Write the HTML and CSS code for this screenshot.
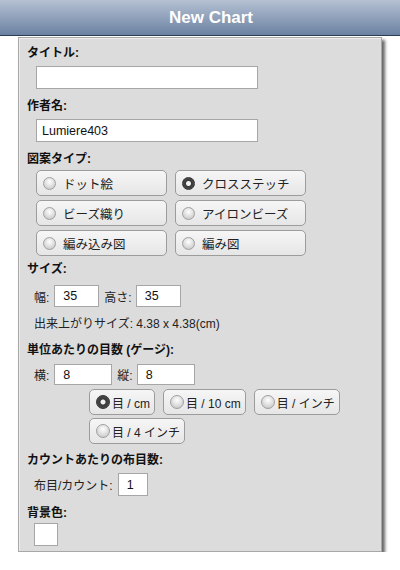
FILE: index.html
```html
<!DOCTYPE html>
<html lang="ja">
<head>
  <meta charset="UTF-8" />
  <meta name="viewport" content="width=device-width, initial-scale=1.0"/>
  <title>New Chart</title>
  <link rel="stylesheet" href="styles.css">
</head>
<body>

  <div class="navbar">New Chart</div>

  <form class="panel" id="chartForm">
    <label class="field-label">タイトル:</label>
    <input class="text-input" type="text" name="title" />

    <label class="field-label gap-9">作者名:</label>
    <input class="text-input gap-3" type="text" name="author" value="Lumiere403" />

    <label class="field-label gap-9">図案タイプ:</label>
    <div class="pattern-grid">
      <label class="choice"><input type="radio" name="ptype" value="dot" /><span class="dot"></span>ドット絵</label>
      <label class="choice"><input type="radio" name="ptype" value="cross" checked /><span class="dot"></span>クロスステッチ</label>
      <label class="choice"><input type="radio" name="ptype" value="beads" /><span class="dot"></span>ビーズ織り</label>
      <label class="choice"><input type="radio" name="ptype" value="iron" /><span class="dot"></span>アイロンビーズ</label>
      <label class="choice"><input type="radio" name="ptype" value="knit-in" /><span class="dot"></span>編み込み図</label>
      <label class="choice"><input type="radio" name="ptype" value="knit" /><span class="dot"></span>編み図</label>
    </div>

    <label class="field-label gap-5">サイズ:</label>
    <div class="sub-row size-row">
      <span>幅:</span>
      <input class="num-input small" type="text" value="35" />
      <span class="after">高さ:</span>
      <input class="num-input small" type="text" value="35" />
    </div>
    <div class="sub-row note">出来上がりサイズ: 4.38 x 4.38(cm)</div>

    <label class="field-label gap-10">単位あたりの目数 (ゲージ):</label>
    <div class="sub-row gauge-row">
      <span>横:</span>
      <input class="num-input wide" type="text" value="8" />
      <span class="after">縦:</span>
      <input class="num-input wide" type="text" value="8" />
    </div>
    <div class="unit-group">
      <label class="choice unit"><input type="radio" name="unit" value="cm" checked /><span class="dot"></span>目 / cm</label>
      <label class="choice unit"><input type="radio" name="unit" value="10cm" /><span class="dot"></span>目 / 10 cm</label>
      <label class="choice unit"><input type="radio" name="unit" value="inch" /><span class="dot"></span>目 / インチ</label>
      <label class="choice unit"><input type="radio" name="unit" value="4inch" /><span class="dot"></span>目 / 4 インチ</label>
    </div>

    <label class="field-label gap-8">カウントあたりの布目数:</label>
    <div class="sub-row count-row">
      <span>布目/カウント:</span>
      <input class="num-input count" type="text" value="1" />
    </div>

    <label class="field-label gap-9">背景色:</label>
    <div class="color-box"></div>
  </form>

</body>
</html>
```

FILE: styles.css
```css
* {
  box-sizing: border-box;
  font-family: "Liberation Sans", "Noto Sans CJK JP", sans-serif;
}
body {
  margin: 0;
  background: white;
  color: #1a1a1a;
  font-size: 12px;
}
.navbar {
  height: 36px;
  line-height: 35px;
  padding-left: 22px;
  text-align: center;
  color: white;
  font-size: 17px;
  font-weight: bold;
  background: linear-gradient(#b5c1d3, #6b81a2);
  border-bottom: 1px solid #2b3c58;
}
.panel {
  display: flex;
  flex-direction: column;
  align-items: flex-start;
  width: 364px;
  margin: 1px 0 0 18px;
  padding: 7px 8px 5px;
  background: #dcdcdc;
  border: 1px solid #a8a8a8;
  box-shadow: inset 1px 1px 0 #ececec, 3px 3px 3px rgba(0,0,0,0.6);
}
.field-label {
  display: block;
  line-height: 16px;
  font-weight: bold;
  font-size: 12px;
  color: #111;
}
.gap-5 { margin-top: 5px; }
.gap-8 { margin-top: 8px; }
.gap-9 { margin-top: 9px; }
.gap-10 { margin-top: 10px; }
.gap-3 { margin-top: 3px !important; }

input[type=text] {
  background: white;
  border: 1px solid #a6a6a6;
  border-radius: 0;
  outline: none;
  color: #111;
  font-size: 12.5px;
  margin: 0;
}
.text-input {
  width: 222px;
  height: 23px;
  margin: 5px 0 0 9px !important;
  padding: 0 5px;
}
.pattern-grid {
  display: grid;
  grid-template-columns: 131px 131px;
  column-gap: 8px;
  row-gap: 4px;
  margin: 3px 0 0 9px;
}
.choice {
  display: flex;
  align-items: center;
  height: 26px;
  padding-left: 6px;
  font-size: 12.5px;
  color: #222;
  background: linear-gradient(#f6f6f6, #e6e6e6);
  border: 1px solid #9c9c9c;
  border-radius: 5px;
  cursor: pointer;
}
.choice input {
  display: none;
}
.dot {
  width: 13px;
  height: 13px;
  margin-right: 7px;
  border-radius: 50%;
  border: 1px solid #a0a0a0;
  background: radial-gradient(circle at 50% 35%, #ffffff, #d2d2d2 70%, #bcbcbc);
}
.choice input:checked + .dot {
  border-color: #333;
  background: radial-gradient(circle, #f2f2f2 0 2px, #3a3a3a 3px, #555 100%);
}
.sub-row {
  display: flex;
  align-items: center;
  margin-left: 7px;
  color: #222;
}
.sub-row span {
  margin-right: 5px;
}
.sub-row .after {
  margin-left: 5px;
  margin-right: 4px;
}
.size-row { margin-top: 8px; }
.gauge-row { margin-top: 6px; }
.count-row { margin-top: 5px; }
.num-input {
  padding: 0 8px;
}
.num-input.small { width: 45px; height: 22px; }
.num-input.wide { width: 58px; height: 21px; }
.num-input.count { width: 30px; height: 23px; }
.note {
  margin-top: 9px;
  line-height: 16px;
}
.unit-group {
  display: flex;
  flex-wrap: wrap;
  column-gap: 8px;
  row-gap: 3px;
  width: 270px;
  margin: 4px 0 0 62px;
}
.choice.unit {
  padding: 0 4px 0 6px;
  font-size: 12px;
}
.choice.unit .dot {
  width: 14px;
  height: 14px;
  margin-right: 2px;
}
.color-box {
  width: 24px;
  height: 23px;
  margin: 2px 0 0 7px;
  background: white;
  border: 1px solid #a6a6a6;
}
```
